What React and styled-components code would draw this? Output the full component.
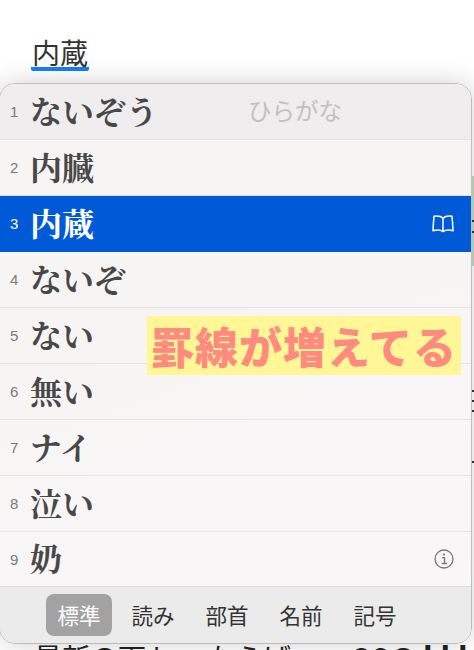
import React from "react";
import styled, { createGlobalStyle } from "styled-components";

const Global = createGlobalStyle`
  html, body {
    margin: 0;
    padding: 0;
    background: #fff;
    overflow: hidden;
  }
`;

const Page = styled.div`
  position: relative;
  width: 474px;
  height: 650px;
  overflow: hidden;
  background: #fff;
  font-family: "Noto Sans CJK JP", "Noto Sans", sans-serif;
`;

const Article = styled.div`
  padding: 32px 0 0 32px;
  color: #333;
  font-size: 28px;
  line-height: 40px;
`;

const Composing = styled.span`
  display: inline-block;
  height: 35px;
  margin-left: -1px;
  padding: 0 1px;
  border-bottom: 4px solid #1a7cf5;
  border-radius: 2px;
  line-height: 40px;
`;

const BehindLine = styled.div`
  position: absolute;
  left: 34px;
  top: 635px;
  color: #222;
  font-size: 28px;
  line-height: 40px;
  white-space: nowrap;
`;

const BehindGap = styled.span`
  margin-left: ${(p) => p.$w}px;
`;

const Bars = styled.span`
  margin-left: 6px;
  font-weight: 700;
  font-size: 32px;
  letter-spacing: 7px;
`;

const Strip = styled.div`
  position: absolute;
  right: 0;
  top: 176px;
  width: 2px;
  height: 90px;
  background: #c4dcbc;
`;

const Tick = styled.div`
  position: absolute;
  right: 0;
  top: ${(p) => p.$y}px;
  width: 2px;
  height: 2px;
  background: #333;
`;

const Panel = styled.div`
  position: absolute;
  left: -1px;
  top: 83px;
  width: 473px;
  height: 561px;
  box-sizing: border-box;
  border: 1px solid #bdbdbd;
  border-radius: 16px;
  overflow: hidden;
  background: linear-gradient(160deg, #f7f5f3 0%, #f7f5f4 40%, #f9f6f8 100%);
  box-shadow: 0 0 26px rgba(0, 0, 0, 0.18);
  display: flex;
  flex-direction: column;
`;

const List = styled.div`
  flex: 1;
  min-height: 0;
  display: flex;
  flex-direction: column;
`;

const Row = styled.div`
  position: relative;
  height: 56px;
  flex: none;
  box-sizing: border-box;
  display: flex;
  align-items: center;
  padding: 0 0 4px 10px;
  background: ${(p) => (p.$active ? "#0059d6" : p.$first ? "#efedee" : "transparent")};
  border-bottom: 1px solid ${(p) => (p.$active ? "#0059d6" : "#e6e3e3")};

  &:last-child {
    height: 54px;
    border-bottom: none;
  }
`;

const Num = styled.span`
  width: 20px;
  padding-top: 4px;
  font-family: "Liberation Sans", sans-serif;
  font-size: 15px;
  color: ${(p) => (p.$active ? "#fff" : "#7a7a7a")};
`;

const Word = styled.span`
  font-family: "Noto Serif CJK JP", "Noto Sans CJK JP", serif;
  font-weight: 700;
  font-size: 32px;
  line-height: 40px;
  color: ${(p) => (p.$active ? "#fff" : "#484848")};
`;

const Hint = styled.span`
  position: absolute;
  left: 248px;
  top: 11px;
  font-size: 23.5px;
  line-height: 30px;
  color: #c2c0c0;
`;

const RowIcon = styled.span`
  margin-left: auto;
  margin-right: 17px;
  padding-top: 4px;
  display: flex;
`;

const Footer = styled.div`
  height: 57px;
  flex: none;
  box-sizing: border-box;
  background: #ebebeb;
  border-top: 1px solid #dcdcdc;
  display: flex;
  align-items: center;
  padding: 0 0 1px 46px;
  gap: 8px;
`;

const Tab = styled.span`
  width: 66px;
  height: 42px;
  border-radius: 8px;
  display: flex;
  align-items: center;
  justify-content: center;
  font-size: 21.5px;
  color: ${(p) => (p.$active ? "#fff" : "#333")};
  background: ${(p) => (p.$active ? "#a2a2a2" : "transparent")};
`;

const Callout = styled.div`
  position: absolute;
  left: 147px;
  top: 316px;
  width: 314px;
  height: 59px;
  background: #fff796;
  color: #ff8a80;
  font-weight: 900;
  font-size: 43px;
  line-height: 59px;
  letter-spacing: 1px;
  text-align: center;
  white-space: nowrap;
`;

const BookIcon = () => (
  <svg width="22" height="18" viewBox="0 0 22 18" fill="none" stroke="#fff" strokeWidth="1.5" strokeLinejoin="round">
    <path d="M11 3.200 C9.500 1.500 7 1 4.500 1 C3.500 1 2.600 1.100 2 1.300 C1.600 5 1.200 11 1 15.800 C4 15 8.500 14.800 11 16.600 C13.500 14.800 18 15 21 15.800 C20.800 11 20.400 5 20 1.300 C19.400 1.100 18.500 1 17.500 1 C15 1 12.500 1.500 11 3.200 Z" />
    <path d="M11 3.200 V16.600" />
  </svg>
);

const InfoIcon = () => (
  <svg width="20" height="20" viewBox="0 0 20 20" fill="none" stroke="#777" strokeWidth="1.3">
    <circle cx="10" cy="10" r="9" />
    <circle cx="10" cy="5.600" r="1.100" fill="#777" stroke="none" />
    <path d="M8 8.700 H10.500 V14.500 M7.800 14.500 H13" />
  </svg>
);

const candidates = [
  { word: "ないぞう", hint: "ひらがな" },
  { word: "内臓" },
  { word: "内蔵", active: true, icon: <BookIcon /> },
  { word: "ないぞ" },
  { word: "ない" },
  { word: "無い" },
  { word: "ナイ" },
  { word: "泣い" },
  { word: "奶", icon: <InfoIcon /> },
];

const tabs = ["標準", "読み", "部首", "名前", "記号"];
const ticks = [220, 231, 390, 400, 410, 461];

export default function App() {
  return (
    <Page>
      <Global />
      <Article>
        <Composing>内蔵</Composing>
      </Article>
      <BehindLine>
        最新の下ト<BehindGap $w={33}>ならば</BehindGap>
        <BehindGap $w={60}>OSの</BehindGap>
        <Bars>III</Bars>
      </BehindLine>
      <Strip />
      {ticks.map((y) => (
        <Tick key={y} $y={y} />
      ))}
      <Panel>
        <List>
          {candidates.map((c, i) => (
            <Row key={c.word} $active={c.active} $first={i === 0}>
              <Num $active={c.active}>{i + 1}</Num>
              <Word $active={c.active}>{c.word}</Word>
              {c.hint && <Hint>{c.hint}</Hint>}
              {c.icon && <RowIcon>{c.icon}</RowIcon>}
            </Row>
          ))}
        </List>
        <Footer>
          {tabs.map((t, i) => (
            <Tab key={t} $active={i === 0}>
              {t}
            </Tab>
          ))}
        </Footer>
      </Panel>
      <Callout>罫線が増えてる</Callout>
    </Page>
  );
}
